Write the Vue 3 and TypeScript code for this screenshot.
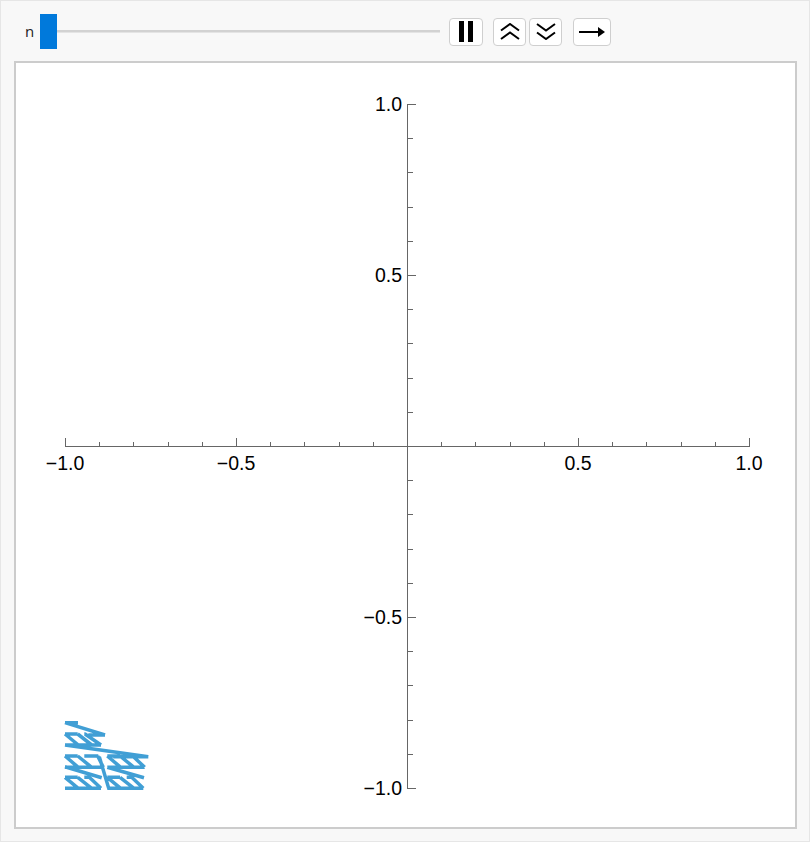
<script setup lang="ts">
const xMajor = [-1, -0.5, 0.5, 1]
const toX = (v: number) => 407 + v * 342
const toY = (v: number) => 446 - v * 342
const ticks: number[] = []
for (let i = -10; i <= 10; i++) if (i !== 0) ticks.push(i / 10)
const isMajor = (v: number) => Math.abs(Math.round(v * 10)) % 5 === 0
const fmt = (v: number) => (v < 0 ? '\u2212' : '') + Math.abs(v).toFixed(1)

const px = (x: number, y: number) => `${(50 + x / 3).toFixed(1)} ${(710 + y / 3).toFixed(1)}`
const seg = (a: number, b: number, c: number, d: number) => `M${px(a, b)} L${px(c, d)}`
function group(x0: number, top: number, bottom: number, topW: number, botW: number): string {
  return [
    seg(x0, top, x0 + 38, top),
    seg(x0 + 58, top, x0 + topW, top),
    seg(x0, bottom, x0 + botW, bottom),
    seg(x0, top, x0 + 40, bottom),
    seg(x0 + 38, top, x0 + 80, bottom),
    seg(x0 + topW - 2, top, x0 + botW, bottom)
  ].join(' ')
}
const curve = [
  seg(45, 38, 84, 38),
  seg(45, 38, 165, 75),
  seg(165, 75, 115, 75),
  group(45, 72, 105, 62, 108),
  seg(45, 105, 295, 140),
  seg(295, 140, 190, 140),
  group(45, 138, 172, 100, 115),
  group(172, 138, 172, 78, 112),
  seg(45, 170, 155, 203),
  seg(172, 172, 282, 203),
  group(45, 202, 235, 75, 108),
  group(172, 202, 235, 75, 108),
  seg(148, 140, 176, 235)
].join(' ')
</script>

<template>
  <div class="frame">
    <div class="toolbar">
      <span class="label">n</span>
      <div class="slider">
        <div class="track"></div>
        <div class="thumb"></div>
      </div>
      <button class="btn pause" aria-label="Pause">
        <svg width="16" height="21" viewBox="0 0 16 21"><rect x="1" y="0" width="5" height="21" fill="#000" /><rect x="10" y="0" width="5" height="21" fill="#000" /></svg>
      </button>
      <div class="pair">
        <button class="btn step" aria-label="Faster">
          <svg width="20" height="17" viewBox="0 0 20 17" fill="none" stroke="#000" stroke-width="2"><path d="M1 7.5 L10 1 L19 7.5" /><path d="M1 16 L10 9.5 L19 16" /></svg>
        </button>
        <button class="btn step" aria-label="Slower">
          <svg width="20" height="17" viewBox="0 0 20 17" fill="none" stroke="#000" stroke-width="2"><path d="M1 1 L10 7.5 L19 1" /><path d="M1 9.5 L10 16 L19 9.5" /></svg>
        </button>
      </div>
      <button class="btn dir" aria-label="Direction">
        <svg width="28" height="14" viewBox="0 0 28 14"><path d="M1 7 H20" stroke="#000" stroke-width="2" /><path d="M20 2 L27 7 L20 12 Z" fill="#000" /></svg>
      </button>
    </div>
    <div class="plot">
      <svg class="canvas" width="811" height="843" viewBox="0 0 811 843">
        <g stroke="#666" stroke-width="1" fill="none" shape-rendering="crispEdges">
          <path d="M65 446.5 H750" />
          <path d="M407.5 104 V789" />
          <path v-for="t in ticks" :key="'x' + t" :d="`M${Math.round(toX(t))}.5 446 V${isMajor(t) ? 438 : 442}`" />
          <path v-for="t in ticks" :key="'y' + t" :d="`M407 ${Math.round(toY(t))}.5 H${isMajor(t) ? 416 : 413}`" />
        </g>
        <g class="tick-label">
          <text v-for="v in xMajor" :key="'lx' + v" :x="toX(v)" y="470" text-anchor="middle">{{ fmt(v) }}</text>
          <text v-for="v in xMajor" :key="'ly' + v" x="402" :y="toY(v) + 7" text-anchor="end">{{ fmt(v) }}</text>
        </g>
        <path :d="curve" fill="none" stroke="#419fd5" stroke-width="3.5" />
      </svg>
    </div>
  </div>
</template>

<style scoped>
.frame {
  box-sizing: border-box;
  width: 810px;
  height: 842px;
  border: 1px solid #e6e6e6;
  background: #f8f8f8;
  padding: 0 12px 12px 13px;
  display: flex;
  flex-direction: column;
}
.toolbar {
  height: 60px;
  display: flex;
  align-items: center;
  font-family: "Open Sans", "Liberation Sans", sans-serif;
  flex: none;
}
.label {
  font-size: 15px;
  color: #222;
  margin-left: 11px;
  width: 15px;
}
.slider {
  position: relative;
  width: 400px;
  height: 35px;
  margin-right: 9px;
  margin-top: 1px;
}
.track {
  position: absolute;
  left: 0;
  right: 0;
  top: 16px;
  height: 2px;
  background: #d2d2d2;
  border-bottom: 1px solid #e4e4e4;
}
.thumb {
  position: absolute;
  left: 0;
  top: 0;
  width: 17px;
  height: 35px;
  background: #0079db;
}
.btn {
  box-sizing: border-box;
  height: 28px;
  padding: 0;
  border: 1px solid #cfcfcf;
  border-radius: 4px;
  background: #fff;
  display: flex;
  align-items: center;
  justify-content: center;
  margin-top: 1px;
}
.pause {
  width: 34px;
}
.pair {
  display: flex;
  gap: 3px;
  margin-left: 10px;
}
.step {
  width: 33px;
}
.dir {
  width: 38px;
  margin-left: 11px;
}
.plot {
  box-sizing: border-box;
  flex: 1;
  border: 2px solid #cccccc;
  background: #fff;
  position: relative;
  overflow: hidden;
}
.canvas {
  position: absolute;
  left: -16px;
  top: -63px;
}
.tick-label {
  font-family: "Liberation Sans", sans-serif;
  font-size: 19.5px;
  fill: #000;
}
</style>

<style>
body {
  background: #fff;
}
</style>
